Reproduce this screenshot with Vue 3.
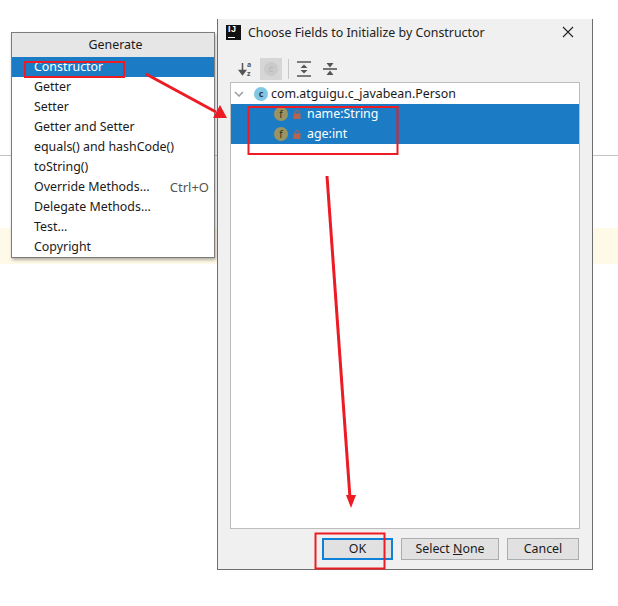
<script setup>
const items = [
  { label: 'Constructor', active: true },
  { label: 'Getter' },
  { label: 'Setter' },
  { label: 'Getter and Setter' },
  { label: 'equals() and hashCode()' },
  { label: 'toString()' },
  { label: 'Override Methods...', key: 'Ctrl+O' },
  { label: 'Delegate Methods...' },
  { label: 'Test...' },
  { label: 'Copyright' }
]
const fields = ['name:String', 'age:int']
</script>

<template>
  <div class="page">
    <div class="rule"></div>
    <div class="band"></div>

    <div class="menu">
      <div class="menu-title">Generate</div>
      <div v-for="i in items" :key="i.label" class="menu-item" :class="{ active: i.active }">
        <span>{{ i.label }}</span>
        <span v-if="i.key" class="shortcut">{{ i.key }}</span>
      </div>
    </div>

    <div class="dialog">
      <div class="titlebar">
        <div class="ij"><span>IJ</span><i></i></div>
        <div class="title">Choose Fields to Initialize by Constructor</div>
        <svg class="close" width="12" height="12" viewBox="0 0 12 12"><path d="M1 1L11 11M11 1L1 11" stroke="#222" stroke-width="1.1" fill="none"/></svg>
      </div>

      <div class="toolbar">
        <svg class="tool" width="16" height="18" viewBox="0 0 16 18">
          <path d="M4.500 3V14M1.500 10.500L4.500 14.500L7.500 10.500Z" stroke="#555" stroke-width="1.500" fill="#555"/>
          <text x="9" y="7" class="az">a</text>
          <text x="9" y="15.500" class="az">z</text>
        </svg>
        <div class="tool-on"><span class="ghost">c</span></div>
        <div class="sep"></div>
        <svg class="tool" width="14" height="16" viewBox="0 0 14 16">
          <path d="M0 1H14M0 15H14" stroke="#555" stroke-width="1.600"/>
          <path d="M7 3.500L10.500 7H3.500ZM7 12.500L3.500 9H10.500Z" fill="#555"/>
        </svg>
        <svg class="tool tool-b" width="14" height="16" viewBox="0 0 14 16">
          <path d="M0 8H14" stroke="#555" stroke-width="1.600"/>
          <path d="M7 6.500L3.500 2H10.500ZM7 9.500L10.500 14H3.500Z" fill="#555"/>
        </svg>
      </div>

      <div class="tree">
        <div class="root">
          <svg width="10" height="6" viewBox="0 0 10 6"><path d="M1 1L5 5L9 1" stroke="#a0a0a0" stroke-width="1.600" fill="none"/></svg>
          <span class="cls">c</span>
          <span>com.atguigu.c_javabean.Person</span>
        </div>
        <div v-for="f in fields" :key="f" class="field">
          <span class="f">f</span>
          <svg width="8" height="9" viewBox="0 0 8 9"><path d="M2 4V2.500a2 2 0 0 1 4 0V4" stroke="#b5654d" stroke-width="1" fill="none"/><rect x="0.500" y="3.500" width="7" height="5.500" fill="#b5654d"/></svg>
          <span class="fname">{{ f }}</span>
        </div>
      </div>

      <div class="buttons">
        <button class="btn ok">OK</button>
        <button class="btn none">Select <u>N</u>one</button>
        <button class="btn cancel">Cancel</button>
      </div>
    </div>

    <svg class="marks" width="618" height="606" viewBox="0 0 618 606">
      <g fill="none" stroke="#ed1c24" stroke-width="2">
        <rect x="25" y="62" width="99" height="15"/>
        <rect x="248.500" y="107" width="149" height="47"/>
        <rect x="315.500" y="533.500" width="69" height="35"/>
      </g>
      <path d="M146 74L216 112" stroke="#ed1c24" stroke-width="3"/>
      <path d="M227 118L213 118L220 105Z" fill="#ed1c24"/>
      <path d="M327 176L350 498" stroke="#ed1c24" stroke-width="3"/>
      <path d="M351 508L346 495L356 495Z" fill="#ed1c24"/>
    </svg>
  </div>
</template>

<style scoped>
.page {
  position: relative;
  width: 618px;
  height: 606px;
  overflow: hidden;
  background: #fff;
  font-family: "Noto Sans", "Noto Sans CJK SC", sans-serif;
  font-size: 12.4px;
  color: #1a1a1a;
  padding-top: 155px;
  box-sizing: border-box;
}
.rule { height: 1px; background: #c4c4c4; }
.band { height: 36px; margin-top: 72px; background: #fffae8; }

.menu {
  position: absolute;
  left: 11px;
  top: 32px;
  width: 202px;
  border: 1px solid #7c7c7c;
  background: #fff;
  box-shadow: 1px 2px 3px rgba(0,0,0,.3);
}
.menu-title {
  height: 24px;
  line-height: 23px;
  text-align: center;
  padding-left: 5px;
  background: #e6e6e6;
}
.menu-item {
  height: 20px;
  line-height: 20px;
  padding: 0 5px 0 22px;
  display: flex;
  justify-content: space-between;
}
.menu-item.active { background: #1b7bc4; color: #fff; }
.shortcut { color: #555; font-size: 13px; }

.dialog {
  position: absolute;
  left: 217px;
  top: 19px;
  width: 374px;
  height: 550px;
  background: #f0f0f0;
  border: solid #6e6e6e;
  border-width: 0 1px 1px 1px;
  display: flex;
  flex-direction: column;
}
.titlebar {
  display: flex;
  align-items: center;
  height: 26px;
  padding: 0 18px 0 8px;
}
.ij {
  width: 15px;
  height: 15px;
  background: #111;
  color: #fff;
  font-family: "Liberation Sans", sans-serif;
  font-size: 9px;
  font-weight: 700;
  line-height: 9px;
  letter-spacing: .5px;
  padding-left: 2px;
  box-sizing: border-box;
  margin-right: 7px;
  position: relative;
}
.ij span { display: block; }
.ij i { position: absolute; left: 2px; bottom: 2px; width: 7px; height: 1px; background: #fff; }
.title { flex: 1; color: #222; }
.toolbar {
  display: flex;
  align-items: center;
  height: 26px;
  margin-top: 11px;
  padding-left: 20px;
}
.tool { display: block; }
.az { font-size: 7px; font-weight: 700; fill: #555; }
.tool-on {
  width: 22px;
  height: 22px;
  margin-left: 6px;
  background: #d6d6d6;
  display: flex;
  align-items: center;
  justify-content: center;
}
.ghost {
  width: 14px;
  height: 14px;
  border-radius: 50%;
  background: #cacaca;
  color: #b5b5b5;
  font-size: 9px;
  line-height: 14px;
  text-align: center;
}
.sep { width: 1px; height: 20px; background: #c8c8c8; margin: 0 8px 0 6px; }
.tool-b { margin-left: 12px; }

.tree {
  flex: 1;
  margin: 0 12px;
  background: #fff;
  border: 1px solid #bdbdbd;
  padding-top: 1px;
}
.root {
  height: 20px;
  line-height: 18px;
  display: flex;
  align-items: center;
  padding-left: 3px;
}
.cls {
  width: 14px;
  height: 14px;
  margin: 0 3px 0 10px;
  border-radius: 50%;
  background: #7ec8e3;
  color: #334;
  font-size: 9px;
  font-weight: 700;
  line-height: 14px;
  text-align: center;
}
.field {
  height: 20px;
  display: flex;
  align-items: center;
  background: #1b7bc4;
  color: #fff;
  padding-left: 43px;
}
.f {
  width: 14px;
  height: 14px;
  margin-right: 5px;
  border-radius: 50%;
  background: #9a9462;
  color: #2c2c1c;
  font-size: 10px;
  line-height: 14px;
  text-align: center;
}
.fname { margin-left: 6px; padding-bottom: 1px; }

.buttons {
  display: flex;
  justify-content: flex-end;
  gap: 8px;
  padding: 9px 13px 9px 0;
}
.btn {
  height: 22px;
  padding: 0 0 1px;
  box-sizing: border-box;
  background: #e1e1e1;
  border: 1px solid #adadad;
  font: inherit;
  color: #1a1a1a;
}
.ok { width: 71px; border: 2px solid #0f80d8; }
.none { width: 98px; }
.cancel { width: 72px; }

.marks { position: absolute; left: 0; top: 0; pointer-events: none; }
</style>
